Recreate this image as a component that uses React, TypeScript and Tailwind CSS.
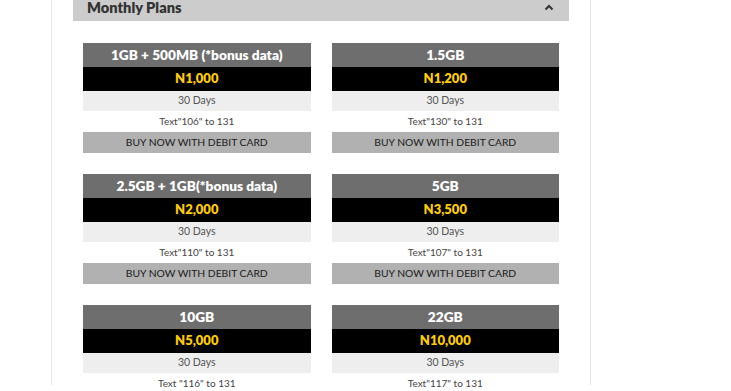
const PLANS = [
    { name: "1GB + 500MB (*bonus data)", price: "N1,000", days: "30 Days", code: 'Text"106" to 131' },
    { name: "1.5GB", price: "N1,200", days: "30 Days", code: 'Text"130" to 131' },
    { name: "2.5GB + 1GB(*bonus data)", price: "N2,000", days: "30 Days", code: 'Text"110" to 131' },
    { name: "5GB", price: "N3,500", days: "30 Days", code: 'Text"107" to 131' },
    { name: "10GB", price: "N5,000", days: "30 Days", code: 'Text "116" to 131' },
    { name: "22GB", price: "N10,000", days: "30 Days", code: 'Text"117" to 131' },
];

function PlanCard({ plan }: { plan: (typeof PLANS)[number] }) {
    return (
        <div className="flex flex-col text-center">
            <div className="h-[24px] flex items-center justify-center bg-[#6e6e6e] text-white font-extrabold text-[13.7px]">
                {plan.name}
            </div>
            <div className="h-[24px] flex items-center justify-center bg-black text-[#ffcc00] font-extrabold text-[13px]">
                {plan.price}
            </div>
            <div className="h-[20px] flex items-center justify-center bg-[#eeeeee] text-[#555] text-[10.5px]">
                {plan.days}
            </div>
            <div className="h-[21px] flex items-center justify-center text-[#444] text-[10px]">
                {plan.code}
            </div>
            <button className="h-[21px] flex items-center justify-center bg-[#b1b1b1] text-[#1a1a1a] text-[10.3px] uppercase">
                Buy now with debit card
            </button>
        </div>
    );
}

export default function App() {
    return (
        <div className="w-[731px] h-[391px] overflow-hidden bg-white font-['Lato',sans-serif]">
            <div className="ml-[51px] w-[540px] h-full border-x border-[#e6e6e6] px-[21px]">
                <div className="mt-[-6px] h-[27px] bg-[#cccccc] flex items-center justify-between pl-[14px] pr-[15px]">
                    <span className="text-[14.6px] font-extrabold text-[#333]">Monthly Plans</span>
                    <svg width="10" height="7" viewBox="0 0 10 7" className="text-[#333]">
                        <path d="M1.5 5.5 L5 2 L8.5 5.5" fill="none" stroke="currentColor" strokeWidth="2" />
                    </svg>
                </div>
                <div className="mt-[22px] px-[10px] grid grid-cols-2 gap-x-[21px] gap-y-[21px]">
                    {PLANS.map((p) => (
                        <PlanCard key={p.name} plan={p} />
                    ))}
                </div>
            </div>
        </div>
    );
}
